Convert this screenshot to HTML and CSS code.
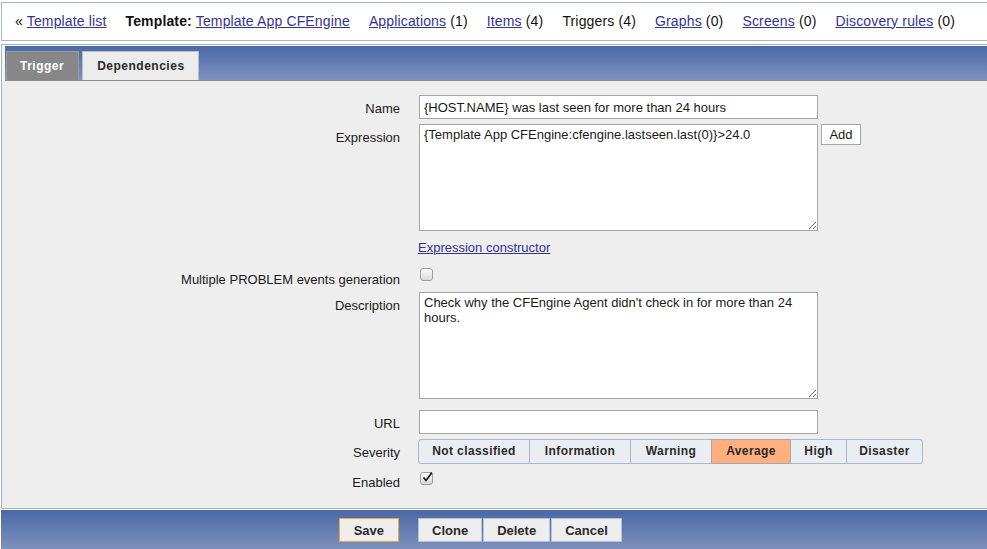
FILE: index.html
```html
<!DOCTYPE html>
<html>
<head>
<meta charset="utf-8">
<title>Trigger</title>
<link rel="stylesheet" href="styles.css">
</head>
<body>
<div class="nav">
  <span class="nav-item">« <a href="#">Template list</a></span>
  <span class="nav-item"><b>Template:</b> <a href="#">Template App CFEngine</a></span>
  <span class="nav-item"><a href="#">Applications</a> (1)</span>
  <span class="nav-item"><a href="#">Items</a> (4)</span>
  <span class="nav-item">Triggers (4)</span>
  <span class="nav-item"><a href="#">Graphs</a> (0)</span>
  <span class="nav-item"><a href="#">Screens</a> (0)</span>
  <span class="nav-item"><a href="#">Discovery rules</a> (0)</span>
</div>

<div class="panel">
  <div class="tabbar">
    <span class="tab tab-active">Trigger</span>
    <span class="tab">Dependencies</span>
  </div>
  <div class="form">
    <div class="label">Name</div>
    <div class="field"><input class="text wide" type="text" value="{HOST.NAME} was last seen for more than 24 hours"></div>

    <div class="label">Expression</div>
    <div class="field row">
      <textarea class="area">{Template App CFEngine:cfengine.lastseen.last(0)}&gt;24.0</textarea>
      <button class="add">Add</button>
    </div>

    <div class="label"></div>
    <div class="field linkrow"><a href="#">Expression constructor</a></div>

    <div class="label lbl-check">Multiple PROBLEM events generation</div>
    <div class="field checkrow"><span class="check"></span></div>

    <div class="label">Description</div>
    <div class="field"><textarea class="area">Check why the CFEngine Agent didn't check in for more than 24 hours.</textarea></div>

    <div class="label url-label">URL</div>
    <div class="field url-field"><input class="text wide" type="text" value=""></div>

    <div class="label">Severity</div>
    <div class="field">
      <div class="sev">
        <span class="sev-btn">Not classified</span>
        <span class="sev-btn">Information</span>
        <span class="sev-btn">Warning</span>
        <span class="sev-btn sev-on">Average</span>
        <span class="sev-btn">High</span>
        <span class="sev-btn">Disaster</span>
      </div>
    </div>

    <div class="label">Enabled</div>
    <div class="field checkrow2"><span class="check"><svg class="tick" width="13" height="13" viewBox="0 0 13 13"><path d="M2.5 6.5 L5 9.5 L11 1.5" fill="none" stroke="#111" stroke-width="1.6"/></svg></span></div>
  </div>
</div>

<div class="footer">
  <div class="foot-left"><button class="btn btn-main">Save</button></div>
  <div class="foot-right">
    <button class="btn">Clone</button>
    <button class="btn">Delete</button>
    <button class="btn">Cancel</button>
  </div>
</div>
</body>
</html>
```

FILE: styles.css
```css
html, body {
  margin: 0;
  padding: 0;
  background: #ffffff;
  overflow: hidden;
}
body {
  font-family: "Liberation Sans", Arial, sans-serif;
  font-size: 13px;
  color: #1a1a1a;
}
a {
  color: #34348f;
  text-decoration: underline;
}

/* top navigation */
.nav {
  margin: 2px 0 0 1px;
  border: 1px solid #a7b4c3;
  border-right: none;
  display: flex;
  align-items: center;
  gap: 19px;
  padding-left: 13px;
  padding-bottom: 2px;
  height: 35px;
  font-size: 14px;
  letter-spacing: 0.15px;
  color: #111;
}
.nav-item b {
  font-weight: bold;
}

/* panel */
.panel {
  margin: 3px 0 0 1px;
  border: 1px solid #a7b4c3;
  border-right: none;
  padding-top: 1px;
  background: #f6f6f6;
}
.tabbar {
  margin-left: 3px;
  height: 34px;
  background: linear-gradient(#4a68a6, #7f92bf);
  border-bottom: 1px solid #8c8c8c;
  display: flex;
  align-items: flex-end;
  gap: 3px;
  padding-left: 1px;
}
.tab {
  height: 28px;
  line-height: 28px;
  padding: 0 13px 0 14px;
  font-size: 12px;
  font-weight: bold;
  letter-spacing: 0.5px;
  background: #ececec;
  color: #2a2a2a;
  border: 1px solid #b9bec8;
  border-bottom: none;
}
.tab-active {
  background: #878787;
  color: #ffffff;
  border-color: #9b9b9b;
  padding: 0 14px 0 13px;
}

.form {
  background: #eeeeee;
  display: grid;
  grid-template-columns: 398px 1fr;
  column-gap: 19px;
  row-gap: 5px;
  padding: 14px 0 15px 0;
}
.label {
  text-align: right;
  padding-top: 4px;
  line-height: 20px;
  color: #1a1a1a;
}
.lbl-check {
  padding-top: 7px;
  line-height: 15px;
}
.field {
  min-height: 20px;
}
.row {
  display: flex;
  align-items: flex-start;
  gap: 3px;
}
.text {
  box-sizing: border-box;
  height: 24px;
  border: 1px solid #a6a6a6;
  background: #ffffff;
  font-family: "Liberation Sans", Arial, sans-serif;
  font-size: 13px;
  color: #1a1a1a;
  padding: 0 4px;
  margin: 0;
  outline: none;
}
.wide {
  width: 399px;
}
.area {
  box-sizing: border-box;
  width: 399px;
  height: 107px;
  border: 1px solid #a6a6a6;
  background: #ffffff;
  font-family: "Liberation Sans", Arial, sans-serif;
  font-size: 13px;
  line-height: 15px;
  color: #1a1a1a;
  padding: 2px 4px;
  margin: 0;
  display: block;
  outline: none;
}
.add {
  box-sizing: border-box;
  width: 40px;
  height: 21px;
  border: 1px solid #a6a6a6;
  background: #ffffff;
  font-family: "Liberation Sans", Arial, sans-serif;
  font-size: 13px;
  color: #1a1a1a;
  padding: 0;
  margin: 0;
}
.linkrow {
  line-height: 24px;
  margin-left: -1px;
}
.checkrow {
  height: 22px;
  padding-top: 3px;
  box-sizing: border-box;
}
.checkrow2 {
  height: 24px;
  padding-top: 3px;
  box-sizing: border-box;
}
.check {
  display: block;
  position: relative;
  width: 11px;
  height: 11px;
  margin-left: 1px;
  border: 1px solid #a0a0a0;
  border-radius: 3px;
  background: linear-gradient(#fbfbfb, #d9d9d9);
}
.tick {
  position: absolute;
  left: 0;
  top: -2px;
}
.url-label,
.url-field {
  margin-top: 6px;
}

/* severity */
.sev {
  display: flex;
  margin-left: -1px;
  height: 25px;
}
.sev-btn {
  box-sizing: border-box;
  height: 25px;
  line-height: 23px;
  padding: 0;
  text-align: center;
  font-size: 12px;
  font-weight: bold;
  letter-spacing: 0.4px;
  color: #2a2a2a;
  background: #eaedf2;
  border: 1px solid #a9b8cf;
  margin-left: -1px;
}
.sev-btn:nth-child(1) { width: 112px; margin-left: 0; border-radius: 3px 0 0 3px; }
.sev-btn:nth-child(2) { width: 102px; }
.sev-btn:nth-child(3) { width: 82px; }
.sev-btn:nth-child(4) { width: 80px; }
.sev-btn:nth-child(5) { width: 57px; }
.sev-btn:nth-child(6) { width: 77px; border-radius: 0 3px 3px 0; }
.sev-on {
  background: #ffb07e;
  border-color: #a8a8a8;
  position: relative;
}

/* footer */
.footer {
  margin: 1px 0 0 1px;
  height: 40px;
  background: linear-gradient(#4a68a6, #7f92bf);
  display: grid;
  grid-template-columns: 398px 1fr;
  column-gap: 19px;
  padding-top: 8px;
  box-sizing: border-box;
}
.foot-left {
  display: flex;
  justify-content: flex-end;
  padding-right: 0;
}
.foot-right {
  display: flex;
  gap: 1px;
}
.btn {
  box-sizing: border-box;
  height: 24px;
  padding: 0 13px;
  border: 1px solid #b7c2d4;
  background: #eeeeee;
  font-family: "Liberation Sans", Arial, sans-serif;
  font-size: 13px;
  font-weight: bold;
  letter-spacing: 0;
  color: #2a2a2a;
  margin: 0;
}
.btn-main {
  border-color: #f2a440;
  padding: 0 14px;
}
```
